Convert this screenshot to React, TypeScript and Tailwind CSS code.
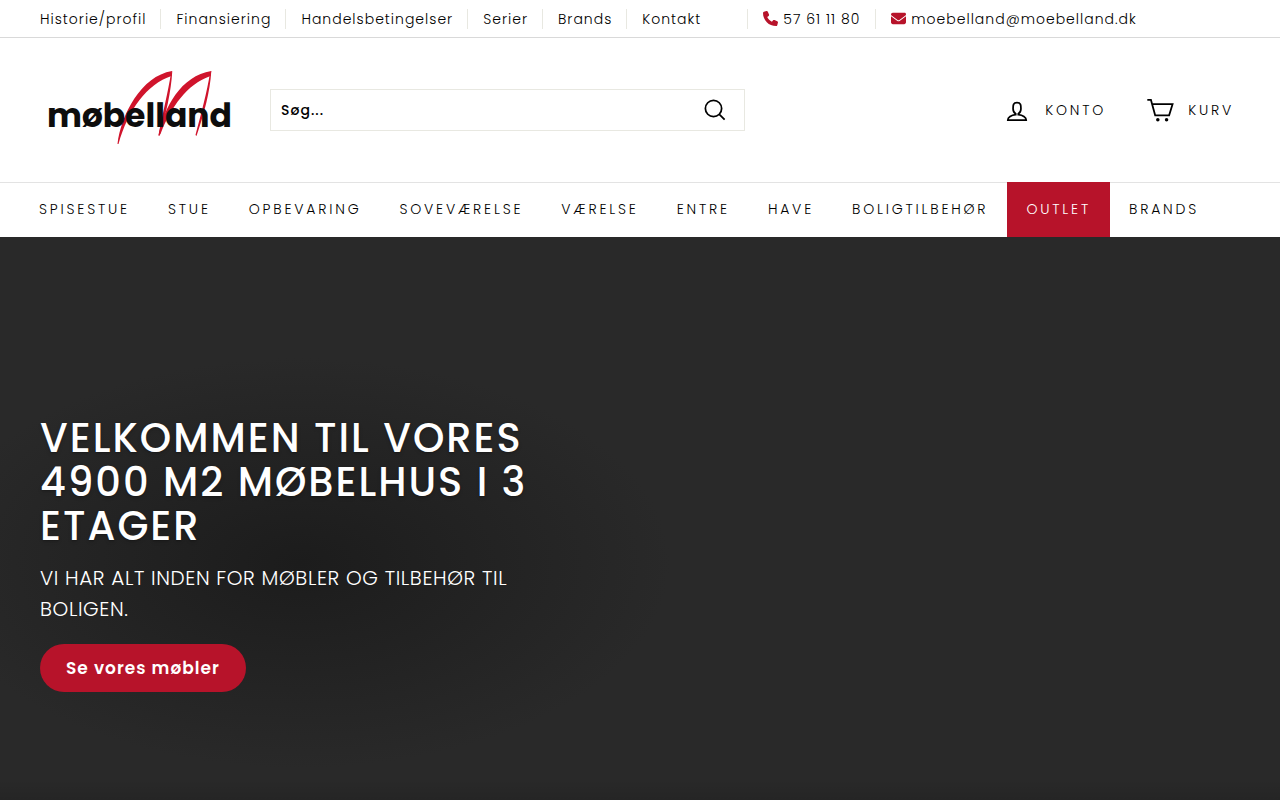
import { useState } from 'react';

const infoLinks = ['Historie/profil', 'Finansiering', 'Handelsbetingelser', 'Serier', 'Brands', 'Kontakt'];

const navLinks = [
  { label: 'Spisestue' },
  { label: 'Stue' },
  { label: 'Opbevaring' },
  { label: 'Soveværelse' },
  { label: 'Værelse' },
  { label: 'Entre' },
  { label: 'Have' },
  { label: 'Boligtilbehør' },
  { label: 'Outlet', highlight: true },
  { label: 'Brands' },
];

function Logo() {
  return (
    <svg viewBox="0 0 200 100" className="h-[100px] w-[200px]" role="img" aria-label="møbelland">
      <g fill="#d0142c">
        <path d="M77.500 84C81 55 101 16 132 11L131.500 16C107 24 88 50 78.500 84Z" />
        <path d="M132.300 11C131 32 126 54 119.500 76L118.500 75C123 52 128 32 131 13Z" />
        <path d="M118.500 76C124 47 141 16 171.300 11L170.500 16C147 24 131 47 120.500 74Z" />
        <path d="M171.300 11C170 32 164 54 156.500 76L155.500 75C161 54 167 32 170 13Z" />
      </g>
      <text x="7" y="67" fontSize="33" fontWeight="700" fill="#0d0d0d">
        møbelland
      </text>
    </svg>
  );
}

function PhoneIcon() {
  return (
    <svg viewBox="0 0 512 512" className="size-[15px]" fill="currentColor" aria-hidden="true">
      <path d="M164.900 24.600c-7.700-18.600-28-28.500-47.400-23.200l-88 24C12.100 30.200 0 46 0 64c0 247.400 200.600 448 448 448 18 0 33.800-12.100 38.600-29.500l24-88c5.300-19.400-4.600-39.700-23.200-47.400l-96-40c-16.300-6.800-35.200-2.100-46.300 11.600L304.700 368C234.300 334.700 177.300 277.700 144 207.300l49.300-40.300c13.700-11.200 18.400-30 11.600-46.300l-40-96z" />
    </svg>
  );
}

function MailIcon() {
  return (
    <svg viewBox="0 0 512 512" className="size-[15px]" fill="currentColor" aria-hidden="true">
      <path d="M48 64C21.500 64 0 85.500 0 112c0 15.100 7.100 29.300 19.200 38.400l217.600 163.200c11.400 8.500 27 8.500 38.400 0l217.600-163.200c12.100-9.100 19.200-23.300 19.200-38.400 0-26.500-21.500-48-48-48H48zM0 176v208c0 35.300 28.700 64 64 64h384c35.300 0 64-28.700 64-64V176L294.400 339.200c-22.800 17.100-54 17.100-76.800 0L0 176z" />
    </svg>
  );
}

function SearchIcon() {
  return (
    <svg viewBox="0 0 64 64" className="size-7" fill="none" stroke="currentColor" strokeWidth="4" aria-hidden="true">
      <path d="M47.160 28.580A18.580 18.580 0 1 1 28.580 10a18.580 18.580 0 0 1 18.580 18.580ZM54 54 41.940 42" />
    </svg>
  );
}

function UserIcon() {
  return (
    <svg viewBox="0 -3 64 64" className="size-7" fill="none" stroke="currentColor" strokeWidth="4" aria-hidden="true">
      <path d="M35 39.840v-2.530c3.300-1.910 6-6.660 6-11.410 0-7.630 0-13.820-9-13.820s-9 6.190-9 13.820c0 4.750 2.700 9.510 6 11.410v2.530c-10.180.850-18 6-18 12.160h42c0-6.190-7.820-11.310-18-12.160Z" />
    </svg>
  );
}

function CartIcon() {
  return (
    <svg viewBox="0 -1 64 64" className="size-7" fill="none" stroke="currentColor" strokeWidth="4" aria-hidden="true">
      <path d="M14 17.440h46.790l-7.940 25.610H20.960l-9.650-35.100H3" />
      <circle cx="27" cy="53" r="4" fill="currentColor" stroke="none" />
      <circle cx="47" cy="53" r="4" fill="currentColor" stroke="none" />
    </svg>
  );
}

function TopBar() {
  return (
    <div className="flex h-[38px] items-center border-b border-[#d9d9d9] px-10 text-sm font-light tracking-[1px]">
      <ul className="flex">
        {infoLinks.map((label) => (
          <li key={label} className="mr-[15px] border-r border-[#e8e8e1] pr-3.5 last:mr-0 last:border-r-0">
            <a href="#">{label}</a>
          </li>
        ))}
      </ul>
      <div className="ml-8 flex">
        <a href="tel:57611180" className="flex items-center gap-[5px] border-l border-[#e8e8e1] px-[15px]">
          <span className="text-[#b7132a]"><PhoneIcon /></span>
          57 61 11 80
        </a>
        <a href="mailto:moebelland@moebelland.dk" className="flex items-center gap-[5px] border-l border-[#e8e8e1] px-[15px]">
          <span className="text-[#b7132a]"><MailIcon /></span>
          moebelland@moebelland.dk
        </a>
      </div>
    </div>
  );
}

function Header() {
  const [query, setQuery] = useState('');

  return (
    <header className="flex h-36 items-center px-10">
      <a href="#" className="mr-[30px]"><Logo /></a>
      <form
        role="search"
        onSubmit={(e) => e.preventDefault()}
        className="flex h-[42px] w-[475px] items-center border border-[#e8e8e1]"
      >
        <input
          type="search"
          aria-label="Søg"
          placeholder="Søg..."
          value={query}
          onChange={(e) => setQuery(e.target.value)}
          className="h-full min-w-0 flex-1 px-2.5 text-sm font-medium tracking-[1px] outline-none placeholder:text-black"
        />
        <button type="submit" aria-label="Søg" className="mr-[15px]"><SearchIcon /></button>
      </form>
      <div className="ml-auto flex gap-10 pr-1.5 text-sm font-light tracking-[0.2em] uppercase">
        <a href="#" className="flex items-center gap-3.5"><UserIcon />Konto</a>
        <a href="#" className="flex items-center gap-3.5"><CartIcon />Kurv</a>
      </div>
    </header>
  );
}

function MainNav() {
  return (
    <nav className="border-t border-[#e3e3e3] px-5">
      <ul className="flex text-sm font-light tracking-[0.2em] uppercase">
        {navLinks.map(({ label, highlight }) => (
          <li key={label}>
            <a
              href="#"
              className={`-mt-px flex h-[55px] items-center px-[19px] pb-0.5 ${highlight ? 'bg-[#b7132a] text-white' : ''}`}
            >
              {label}
            </a>
          </li>
        ))}
      </ul>
    </nav>
  );
}

function Hero() {
  return (
    <section className="flex flex-1 flex-col justify-end bg-[#292929] bg-[linear-gradient(to_top,#0000001a,transparent_20px),radial-gradient(ellipse_370px_205px_at_300px_326px,#1c1c1c,#292929)] px-10 pt-40 pb-[108px] text-white">
      <div className="max-w-[520px]">
        <h1 className="text-[40px] leading-[44px] font-medium tracking-[2px] uppercase text-shadow-md">
          Velkommen til vores 4900 m2 møbelhus i 3 etager
        </h1>
        <p className="mt-[15px] text-xl leading-[31px] font-light tracking-[0.03em] uppercase">
          Vi har alt inden for møbler og tilbehør til boligen.
        </p>
        <a href="#" className="mt-[19px] inline-flex h-12 items-center rounded-full bg-[#b7132a] px-[26px] pt-px text-[17px] font-semibold tracking-[1px]">
          Se vores møbler
        </a>
      </div>
    </section>
  );
}

export default function App() {
  return (
    <div className="flex min-h-screen flex-col bg-white font-['Poppins','Inter',sans-serif] text-black">
      <TopBar />
      <Header />
      <MainNav />
      <Hero />
    </div>
  );
}
